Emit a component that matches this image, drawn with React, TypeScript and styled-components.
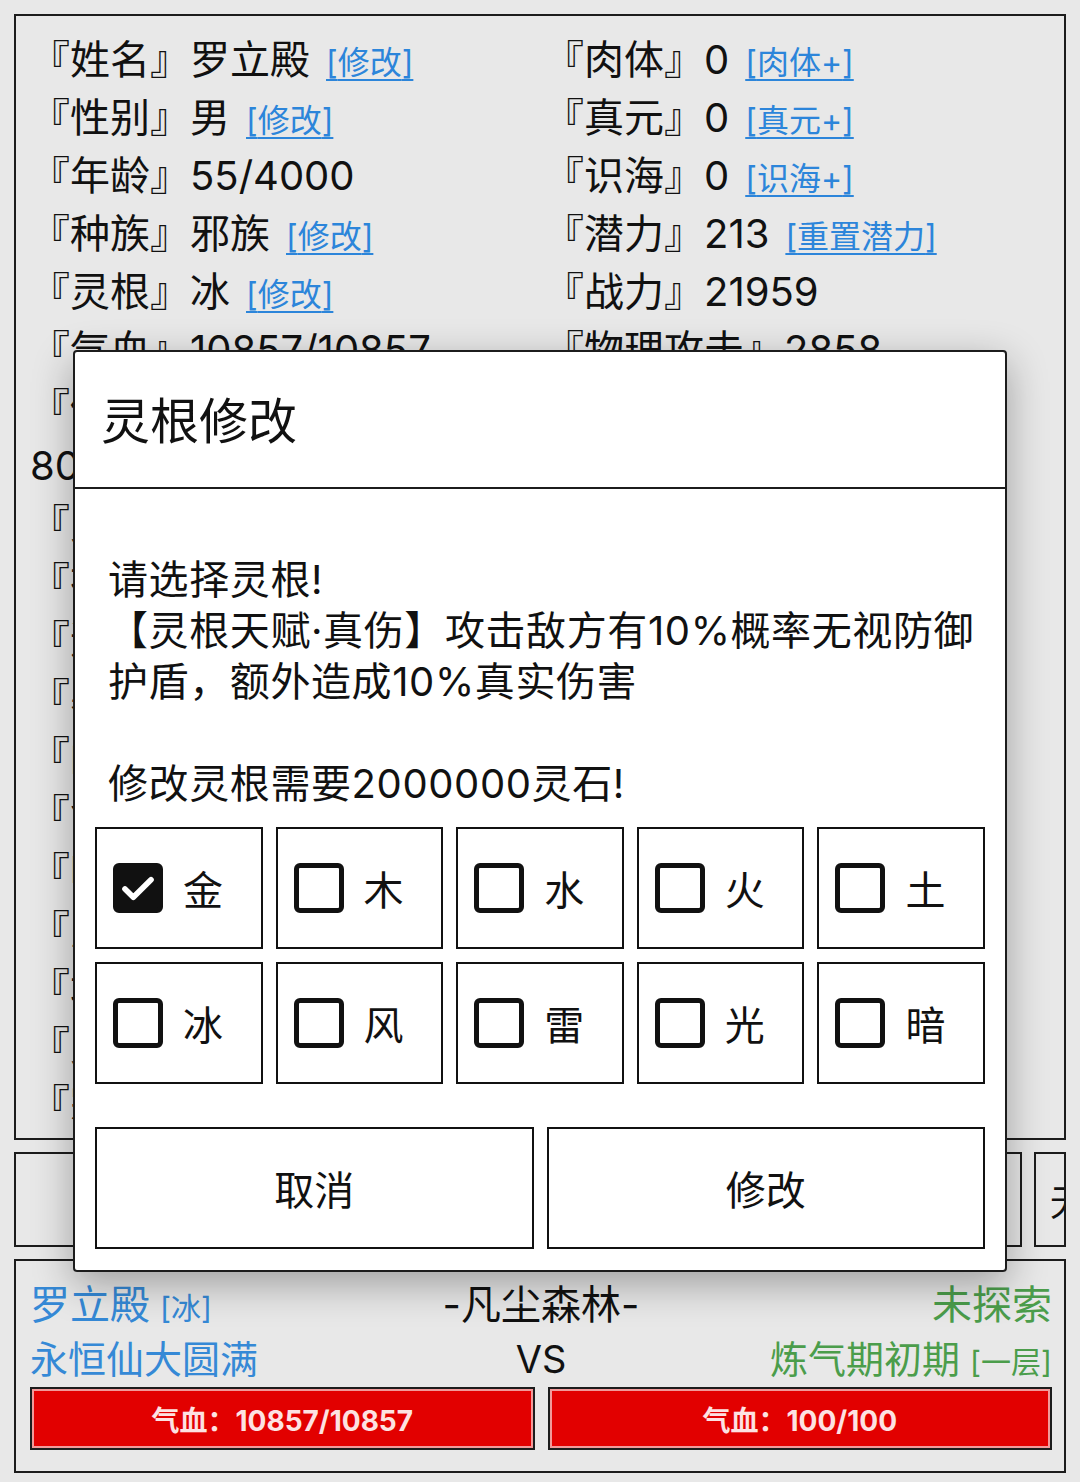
import React from 'react';
import styled, { createGlobalStyle } from 'styled-components';

const GlobalStyle = createGlobalStyle`
  html, body {
    margin: 0;
    padding: 0;
    background: #e8e8e8;
  }
  body {
    font-family: Inter, "Noto Sans CJK SC", sans-serif;
    color: #111;
  }
`;

type Stat = {
  label: string;
  value: React.ReactNode;
  link?: string;
};

const leftStats: Stat[] = [
  { label: '姓名', value: '罗立殿', link: '修改' },
  { label: '性别', value: '男', link: '修改' },
  { label: '年龄', value: '55/4000' },
  { label: '种族', value: '邪族', link: '修改' },
  { label: '灵根', value: '冰', link: '修改' },
  { label: '气血', value: '10857/10857' },
  { label: '修为', value: <>1285647392/<br />8000000000</> },
  { label: '灵力', value: '5280' },
  { label: '神识', value: '3120' },
  { label: '速度', value: '412' },
  { label: '暴击', value: '12%' },
  { label: '闪避', value: '8%' },
  { label: '命中', value: '95%' },
  { label: '吸血', value: '0%' },
  { label: '反伤', value: '0%' },
  { label: '境界', value: '永恒仙大圆满' },
  { label: '灵石', value: '2356120' },
  { label: '宗门', value: '无' },
];

const rightStats: Stat[] = [
  { label: '肉体', value: '0', link: '肉体+' },
  { label: '真元', value: '0', link: '真元+' },
  { label: '识海', value: '0', link: '识海+' },
  { label: '潜力', value: '213', link: '重置潜力' },
  { label: '战力', value: '21959' },
  { label: '物理攻击', value: '2858' },
  { label: '法术攻击', value: '2858' },
  { label: '物理防御', value: '1420' },
  { label: '法术防御', value: '1420' },
  { label: '暴击伤害', value: '150%' },
  { label: '抗暴', value: '5%' },
];

const roots = ['金', '木', '水', '火', '土', '冰', '风', '雷', '光', '暗'];

const menus = ['背包', '功法', '装备', '商店', '宗门', '无尽塔'];

export default function App() {
  const [selected, setSelected] = React.useState('金');

  return (
    <>
      <GlobalStyle />
      <Page>
        <InfoPanel>
          <StatColumn>
            {leftStats.map((s) => (
              <StatLine key={s.label}>
                『{s.label}』{s.value}
                {s.link && <StatLink>[{s.link}]</StatLink>}
              </StatLine>
            ))}
          </StatColumn>
          <StatColumn>
            {rightStats.map((s) => (
              <StatLine key={s.label}>
                『{s.label}』{s.value}
                {s.link && <StatLink>[{s.link}]</StatLink>}
              </StatLine>
            ))}
          </StatColumn>
        </InfoPanel>

        <MenuRow>
          {menus.map((m, i) => (
            <MenuButton key={m} $last={i === menus.length - 1}>
              {m}
            </MenuButton>
          ))}
        </MenuRow>

        <BattlePanel>
          <BattleLine $size={40}>
            <Side $color="#3589d6">
              罗立殿<Tag>[冰]</Tag>
            </Side>
            <Middle>-凡尘森林-</Middle>
            <Side $color="#4b9d4b" $right>
              未探索
            </Side>
          </BattleLine>
          <BattleLine $size={38}>
            <Side $color="#3589d6">永恒仙大圆满</Side>
            <Middle>VS</Middle>
            <Side $color="#4b9d4b" $right>
              炼气期初期<Tag>[一层]</Tag>
            </Side>
          </BattleLine>
          <Bars>
            <HpBar>气血：10857/10857</HpBar>
            <HpBar>气血：100/100</HpBar>
          </Bars>
        </BattlePanel>

        <Dialog>
          <DialogHeader>灵根修改</DialogHeader>
          <DialogBody>
            <Message>
              请选择灵根!
              <br />
              【灵根天赋·真伤】攻击敌方有10%概率无视防御护盾，额外造成10%真实伤害
              <br />
              <br />
              修改灵根需要2000000灵石!
            </Message>
            <RootGrid>
              {roots.map((r) => (
                <RootCell key={r} onClick={() => setSelected(r)}>
                  <Check $on={selected === r}>
                    {selected === r && (
                      <svg width="44" height="44" viewBox="0 0 24 24">
                        <path d="M4.2 12.6l5 4.9L19.8 7" fill="none" stroke="#fff" strokeWidth="3.4" strokeLinecap="round" strokeLinejoin="round" />
                      </svg>
                    )}
                  </Check>
                  {r}
                </RootCell>
              ))}
            </RootGrid>
            <Actions>
              <ActionButton>取消</ActionButton>
              <ActionButton>修改</ActionButton>
            </Actions>
          </DialogBody>
        </Dialog>
      </Page>
    </>
  );
}

const Page = styled.div`
  position: relative;
  width: 1052px;
  padding: 14px 14px 8px;
  display: flex;
  flex-direction: column;
  gap: 12px;
`;

const InfoPanel = styled.div`
  box-sizing: border-box;
  height: 1126px;
  border: 2px solid #1c1c1c;
  padding: 15px 12px 0 14px;
  display: grid;
  grid-template-columns: 514px 1fr;
  overflow: hidden;
`;

const StatColumn = styled.div`
  display: flex;
  flex-direction: column;
`;

const StatLine = styled.div`
  font-size: 40px;
  line-height: 58px;
  white-space: nowrap;
`;

const StatLink = styled.span`
  margin-left: 16px;
  font-size: 32px;
  line-height: 1;
  color: #2c85da;
  text-decoration: underline;
  text-underline-offset: 5px;
  text-decoration-thickness: 2px;
`;

const MenuRow = styled.div`
  display: flex;
  gap: 12px;
  height: 95px;
  overflow: hidden;
`;

const MenuButton = styled.div<{ $last?: boolean }>`
  box-sizing: border-box;
  flex: ${(p) => (p.$last ? '1 1 0' : '0 0 192px')};
  min-width: 0;
  border: 2px solid #1c1c1c;
  display: flex;
  align-items: center;
  justify-content: ${(p) => (p.$last ? 'flex-start' : 'center')};
  padding-left: ${(p) => (p.$last ? '14px' : '0')};
  font-size: 36px;
  white-space: nowrap;
  overflow: hidden;
`;

const BattlePanel = styled.div`
  box-sizing: border-box;
  height: 214px;
  border: 2px solid #1c1c1c;
  padding: 16px 12px 0 14px;
  display: flex;
  flex-direction: column;
`;

const BattleLine = styled.div<{ $size: number }>`
  display: grid;
  grid-template-columns: 1fr auto 1fr;
  align-items: baseline;
  height: 55px;
  line-height: 55px;
  font-size: ${(p) => p.$size}px;
`;

const Side = styled.div<{ $color: string; $right?: boolean }>`
  color: ${(p) => p.$color};
  text-align: ${(p) => (p.$right ? 'right' : 'left')};
  white-space: nowrap;
`;

const Middle = styled.div`
  text-align: center;
  white-space: nowrap;
`;

const Tag = styled.span`
  margin-left: 10px;
  font-size: 30px;
`;

const Bars = styled.div`
  display: grid;
  grid-template-columns: 1fr 1fr;
  gap: 13px;
`;

const HpBar = styled.div`
  box-sizing: border-box;
  height: 63px;
  border: 2px solid #1c1c1c;
  box-shadow: inset 0 0 0 2px #f19a9a;
  background: #e20000;
  color: #fde2e2;
  font-size: 28px;
  font-weight: 700;
  display: flex;
  align-items: center;
  justify-content: center;
`;

const Dialog = styled.div`
  position: absolute;
  left: 73px;
  top: 350px;
  box-sizing: border-box;
  width: 934px;
  height: 922px;
  background: #fff;
  border: 2px solid #1c1c1c;
  border-radius: 4px;
  box-shadow: 0 12px 40px rgba(0, 0, 0, 0.32);
  display: flex;
  flex-direction: column;
`;

const DialogHeader = styled.div`
  box-sizing: border-box;
  height: 137px;
  border-bottom: 2px solid #1c1c1c;
  padding: 0 0 4px 26px;
  display: flex;
  align-items: center;
  font-size: 49px;
`;

const DialogBody = styled.div`
  flex: 1;
  padding: 65px 20px 20px;
  display: flex;
  flex-direction: column;
`;

const Message = styled.div`
  margin: 0 -6px 0 13px;
  font-size: 40px;
  letter-spacing: 0.6px;
  line-height: 51px;
`;

const RootGrid = styled.div`
  margin-top: 18px;
  display: grid;
  grid-template-columns: repeat(5, 1fr);
  grid-auto-rows: 122px;
  gap: 13px;
`;

const RootCell = styled.div`
  box-sizing: border-box;
  border: 2px solid #111;
  padding-left: 16px;
  display: flex;
  align-items: center;
  gap: 20px;
  font-size: 40px;
  cursor: pointer;
`;

const Check = styled.div<{ $on: boolean }>`
  box-sizing: border-box;
  width: 50px;
  height: 50px;
  border: 5px solid #111;
  border-radius: 6px;
  background: ${(p) => (p.$on ? '#111' : '#fff')};
  display: flex;
  align-items: center;
  justify-content: center;
`;

const Actions = styled.div`
  margin-top: 43px;
  display: grid;
  grid-template-columns: 1fr 1fr;
  gap: 13px;
`;

const ActionButton = styled.div`
  box-sizing: border-box;
  height: 122px;
  border: 2px solid #111;
  display: flex;
  align-items: center;
  justify-content: center;
  font-size: 40px;
`;
